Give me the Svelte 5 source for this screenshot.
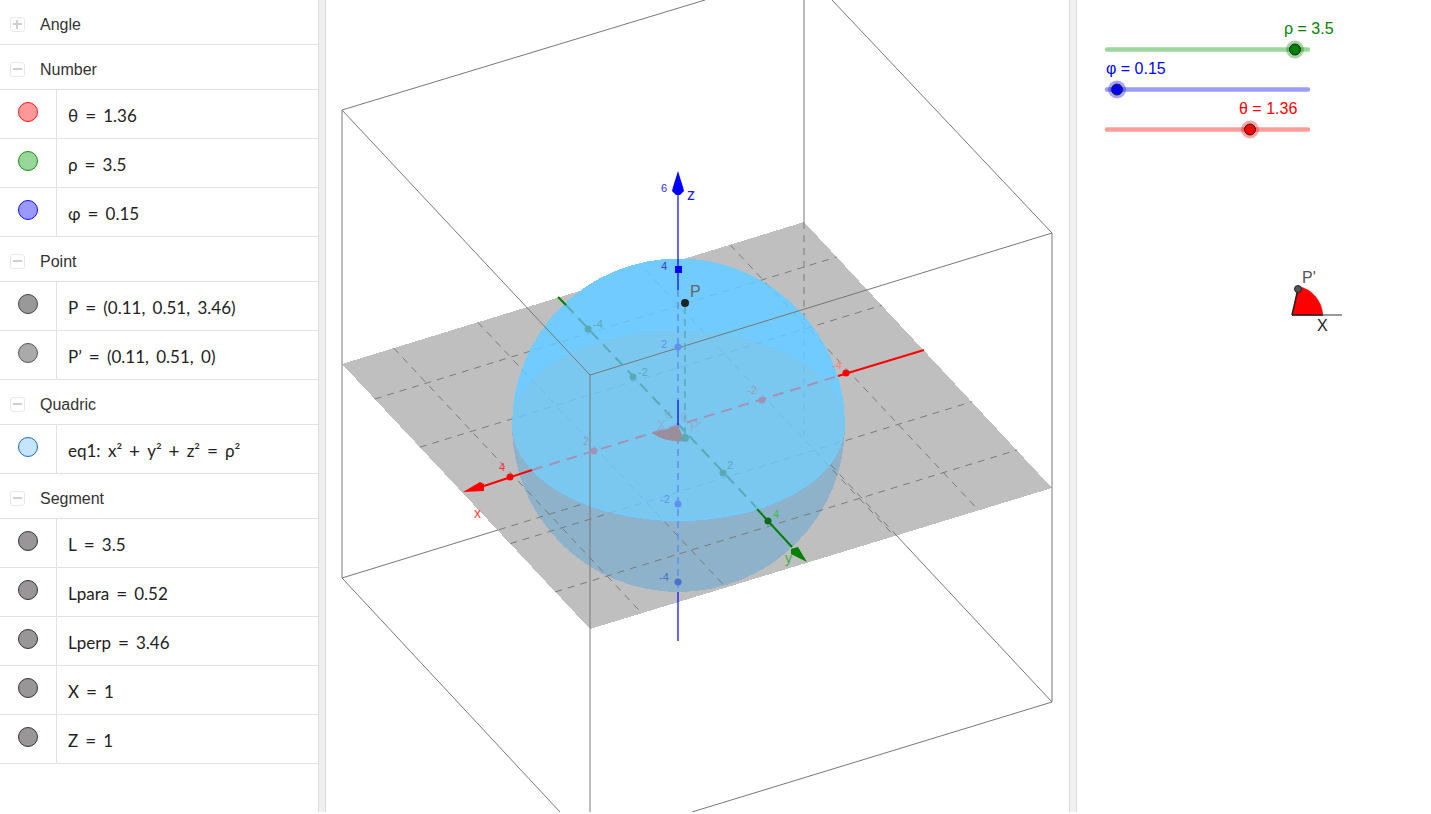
<script>
  const groups = [
    { name: 'Angle', open: false, rows: [] },
    {
      name: 'Number',
      open: true,
      rows: [
        { text: 'θ = 1.36', fill: '#ff9999', line: '#f01818' },
        { text: 'ρ = 3.5', fill: '#99d699', line: '#109010' },
        { text: 'φ = 0.15', fill: '#9999ff', line: '#1010f0' }
      ]
    },
    {
      name: 'Point',
      open: true,
      rows: [
        { text: 'P = (0.11, 0.51, 3.46)', fill: '#999999', line: '#444444' },
        { text: 'P’ = (0.11, 0.51, 0)', fill: '#aaaaaa', line: '#555555' }
      ]
    },
    {
      name: 'Quadric',
      open: true,
      rows: [{ text: 'eq1: x² + y² + z² = ρ²', fill: '#c5e4ff', line: '#1c6cb0' }]
    },
    {
      name: 'Segment',
      open: true,
      rows: ['L = 3.5', 'Lpara = 0.52', 'Lperp = 3.46', 'X = 1', 'Z = 1'].map((text) => ({
        text,
        fill: '#9a9598',
        line: '#333333'
      }))
    }
  ];

  // split a formula so the operators can get their math spacing
  const tokens = (text) => text.split(/ ([=+]) /);

  // plane corners, in page pixels
  const A = [342, 364];
  const AB = [462, -142];
  const AD = [248, 265];
  const at = (u, v) => [A[0] + u * AB[0] + v * AD[0], A[1] + u * AB[1] + v * AD[1]];
  const seg = (p, q) => `M${p[0]},${p[1]}L${q[0]},${q[1]}`;

  // the k = 0 lines are the axes themselves
  let gridPath = '';
  for (let k = -2; k <= 3; k++) {
    if (k === 0) continue;
    const u = 0.476 + k * 0.182;
    const v = 0.496 + k * 0.182;
    if (u > 0 && u < 1) gridPath += seg(at(u, 0), at(u, 1));
    if (v > 0 && v < 1) gridPath += seg(at(0, v), at(1, v));
  }

  const hemi = 'M512,425A166.5,166.5 0 0 1 845,425A166.5,96 0 0 1 512,425Z';

  const sliders = [
    { y: 49.5, knob: 1295, track: '#9cd89c', color: '#008000', halo: 'rgba(0,128,0,0.35)', label: 'ρ = 3.5', lx: 1284, ly: 34 },
    { y: 89.5, knob: 1117, track: '#9c9cff', color: '#0000ff', halo: 'rgba(0,0,255,0.35)', label: 'φ = 0.15', lx: 1106, ly: 74 },
    { y: 129.5, knob: 1250, track: '#ff9c9c', color: '#ff0000', halo: 'rgba(255,0,0,0.35)', label: 'θ = 1.36', lx: 1239, ly: 114 }
  ];

  const ticks = [
    { x: 661, y: 192, t: '6', c: '#2a2aff' },
    { x: 661, y: 270, t: '4', c: '#3b3bdd' },
    { x: 661, y: 348, t: '2', c: '#5f8ff0' },
    { x: 660, y: 503, t: '-2', c: '#5f8ff0' },
    { x: 659, y: 581, t: '-4', c: '#4a70d0' },
    { x: 499, y: 471, t: '4', c: '#ff3030' },
    { x: 583, y: 445, t: '2', c: '#9a9ab8' },
    { x: 747, y: 394, t: '-2', c: '#a09ab8' },
    { x: 832, y: 369, t: '-4', c: '#ff8080' },
    { x: 773, y: 518, t: '4', c: '#40c040' },
    { x: 727, y: 469, t: '2', c: '#5aa9b5' },
    { x: 638, y: 376, t: '-2', c: '#5aa9b5' },
    { x: 593, y: 328, t: '-4', c: '#5aa9b5' },
    { x: 665, y: 419, t: '0', c: '#8db0d0' },
    { x: 681, y: 421, t: '0', c: '#8db0d0' }
  ];
</script>

<div class="app">
  <aside class="algebra">
    {#each groups as group}
      <div class="group-head">
        <span class="toggle" class:open={group.open}></span>
        <span class="group-name">{group.name}</span>
      </div>
      {#each group.rows as row}
        <div class="row">
          <div class="marble-cell">
            <span class="marble" style="background: {row.fill}; border-color: {row.line}"></span>
          </div>
          <div class="formula">
            {#each tokens(row.text) as part, i}
              {#if i % 2}<span class="op">{part}</span>{:else}<span>{part}</span>{/if}
            {/each}
          </div>
        </div>
      {/each}
    {/each}
  </aside>

  <div class="splitter"></div>

  <svg class="scene" viewBox="326 0 743 812">
    <defs>
      <clipPath id="hemi-clip"><path d={hemi} /></clipPath>
    </defs>

    <g shape-rendering="crispEdges">
      <polygon points="342,364 804,222 1052,488 590,629" fill="#bfbfbf" />
      <circle cx="678.5" cy="425.5" r="166.5" fill="#8fb2cb" />
    </g>
    <path d={gridPath} class="grid" />
    <path d="M804,222L804,436M804,436L896,535M804,436L498,530" class="grid" />

    <path d={hemi} fill="#72cbfe" shape-rendering="crispEdges" />
    <g clip-path="url(#hemi-clip)">
      <ellipse cx="678.5" cy="425" rx="166.5" ry="94" fill="#7ac8f0" />
      <path d={gridPath} class="grid faint" />
      <path d="M804,222L804,436" class="grid faint" />
    </g>

    <!-- box edges -->
    <path
      d="M342,110L705,0M342,110L590,375M832,0L1052,233M590,375L1052,233M342,110L342,364M342,364L342,578M590,375L590,812M1052,233L1052,702M804,0L804,222M342,578L498,530M342,578L560,812M1052,702L692,812M896,535L1052,702"
      class="edge"
    />

    <!-- axes seen through the sphere -->
    <path d="M532,470L838,376" class="through" stroke="#a492b4" />
    <path d="M566,305L756,507" class="through" stroke="#5aa9b5" />
    <path d="M678,290L678,400M678,425L678,592" class="through thin" stroke="#5f8ff0" />
    <path d="M685,307L685,436" class="through thin" stroke="#5aa9b5" />

    <!-- z axis -->
    <path d="M678,195L678,290M678,400L678,425M678,592L678,641" class="axis" stroke="#0000ff" />
    <polygon points="678,171 683,187 684,191 680,195 676,195 672,191 673,187" fill="#0000ff" />
    <rect x="675" y="266" width="7" height="7" fill="#0000ff" />
    <circle cx="678" cy="347" r="3.5" fill="#5f8ff0" />
    <circle cx="678" cy="504" r="3.5" fill="#5f8ff0" />
    <circle cx="678" cy="582" r="3.5" fill="#4a70d0" />

    <!-- x axis -->
    <path d="M484,486L532,470M838,376L924,350" class="axis thick" stroke="#ff0000" />
    <polygon points="463,492 480,482 484,484 484,491" fill="#ff0000" />
    <circle cx="510" cy="477" r="3.5" fill="#ff0000" />
    <circle cx="846" cy="373" r="3.5" fill="#ff0000" />
    <circle cx="594" cy="451" r="3.5" fill="#a492b4" />
    <circle cx="762" cy="400" r="3.5" fill="#a492b4" />

    <!-- y axis -->
    <path d="M558,297L566,305M757,509L792,547" class="axis thick" stroke="#008000" />
    <polygon points="807,562 798,547 791,549 791,554" fill="#008000" />
    <circle cx="768" cy="521" r="3.5" fill="#0a6a20" />
    <circle cx="723" cy="473" r="3.5" fill="#5aa9b5" />
    <circle cx="633" cy="377" r="3.5" fill="#5aa9b5" />
    <circle cx="588" cy="329" r="3.5" fill="#5aa9b5" />

    <!-- origin wedge and points -->
    <path d="M652,433L678,426L685,441Q666,443 652,433Z" fill="#9a8d9c" />
    <circle cx="685" cy="438" r="4" fill="#5aa9b5" />
    <circle cx="685" cy="303" r="4" fill="#222222" />

    {#each ticks as tick}
      <text x={tick.x} y={tick.y} class="tick" fill={tick.c}>{tick.t}</text>
    {/each}
    <text x="687" y="200" class="label" fill="#2020e0">z</text>
    <text x="474" y="518" class="label small" fill="#ff4040">x</text>
    <text x="785" y="563" class="label small" fill="#40b040">y</text>
    <text x="690" y="297" class="label" fill="#666666">P</text>
    <text x="657" y="430" class="label small" fill="#8db0d0">X</text>
    <text x="690" y="431" class="label small" fill="#8db0d0">P'</text>
  </svg>

  <div class="splitter"></div>

  <svg class="graphics" viewBox="1077 0 354 812">
    {#each sliders as s}
      <text x={s.lx} y={s.ly} class="value" fill={s.color}>{s.label}</text>
      <line x1="1107" x2="1308" y1={s.y} y2={s.y} stroke={s.track} stroke-width="4.5" stroke-linecap="round" />
      <circle cx={s.knob} cy={s.y} r="9" fill={s.halo} />
      <circle cx={s.knob} cy={s.y} r="5.5" fill={s.color} stroke="#222222" stroke-width="1" />
    {/each}

    <line x1="1292" y1="315" x2="1342" y2="315" stroke="#777777" stroke-width="1.5" />
    <path d="M1292,315L1298,286A31,31 0 0 1 1323,315Z" fill="#ff0000" />
    <line x1="1292" y1="315" x2="1323" y2="315" stroke="#222222" stroke-width="1.5" />
    <line x1="1292" y1="315" x2="1298" y2="289" stroke="#222222" stroke-width="1.5" />
    <circle cx="1298" cy="289" r="3.5" fill="#555555" stroke="#222222" />
    <text x="1302" y="283" class="value" fill="#555555">P'</text>
    <text x="1317" y="331" class="value" fill="#222222">X</text>
  </svg>
</div>

<style>
  .app {
    display: flex;
    height: 812px;
    overflow: hidden;
    background: #fff;
  }

  .algebra {
    width: 318px;
    flex: none;
    font-family: "Liberation Sans", Arial, sans-serif;
    color: #333;
  }

  .group-head {
    display: flex;
    align-items: center;
    box-sizing: border-box;
    height: 45px;
    padding: 5px 0 0 10px;
    border-bottom: 1px solid #e2e2e2;
    font-size: 16px;
    gap: 15px;
  }

  .toggle {
    position: relative;
    width: 13px;
    height: 13px;
    border: 1px solid #e8e8e8;
    border-radius: 3px;
  }

  .toggle::before,
  .toggle:not(.open)::after {
    content: '';
    position: absolute;
    background: #cfcfcf;
  }

  .toggle::before {
    left: 2px;
    right: 2px;
    top: 5px;
    height: 2px;
  }

  .toggle:not(.open)::after {
    top: 2px;
    bottom: 2px;
    left: 5px;
    width: 2px;
  }

  .row {
    display: flex;
    height: 48px;
    border-bottom: 1px solid #e2e2e2;
  }

  .marble-cell {
    width: 57px;
    flex: none;
    padding: 12px 0 0 18px;
    box-sizing: border-box;
    border-right: 1px solid #e2e2e2;
  }

  .marble {
    display: block;
    width: 20px;
    height: 20px;
    box-sizing: border-box;
    border: 1px solid;
    border-radius: 50%;
  }

  .formula {
    display: flex;
    align-items: center;
    padding: 2px 0 0 11px;
    font-family: Lato, "Open Sans", sans-serif;
    font-size: 17px;
    word-spacing: 3px;
    color: #222;
    white-space: pre;
  }

  .op {
    margin: 0 7px;
    font-size: 19px;
    line-height: 1;
  }

  .splitter {
    width: 6px;
    flex: none;
    background: #f0f0f0;
    border-left: 1px solid #dcdcdc;
    border-right: 1px solid #dcdcdc;
  }

  .scene {
    width: 743px;
    height: 812px;
    flex: none;
    font-family: "Liberation Sans", Arial, sans-serif;
  }

  .graphics {
    flex: 1;
    height: 812px;
    font-family: "Liberation Sans", Arial, sans-serif;
  }

  .grid {
    fill: none;
    stroke: #7a7a7a;
    stroke-width: 1;
    stroke-dasharray: 7 6;
  }

  .grid.faint {
    stroke: #66bcec;
  }

  .edge {
    fill: none;
    stroke: #777;
    stroke-width: 1;
  }

  .through {
    fill: none;
    stroke-width: 2;
    stroke-dasharray: 11 7;
  }

  .through.thin {
    stroke-width: 1.5;
    stroke-dasharray: 7 5;
  }

  .axis {
    fill: none;
    stroke-width: 1.2;
  }

  .axis.thick {
    stroke-width: 2;
  }

  .tick {
    font-size: 11px;
  }

  .label {
    font-size: 16px;
  }

  .label.small {
    font-size: 14px;
  }

  .value {
    font-size: 16px;
  }
</style>
